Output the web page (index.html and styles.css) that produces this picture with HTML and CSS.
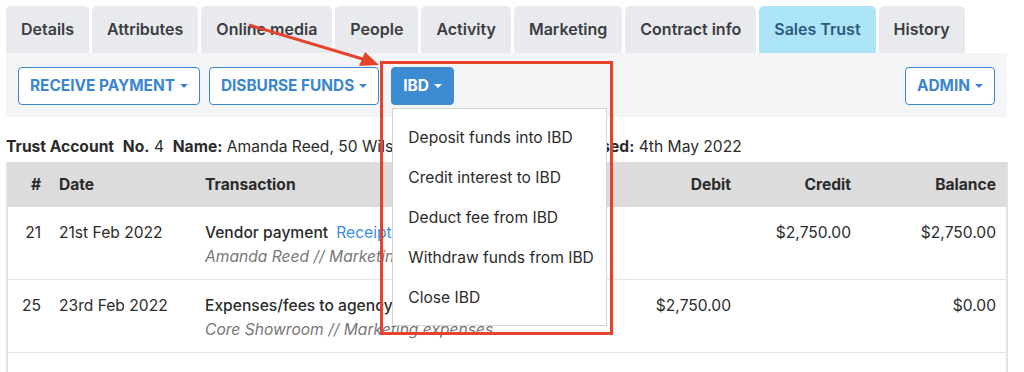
FILE: index.html
```html
<!DOCTYPE html>
<html lang="en">
<head>
  <meta charset="UTF-8">
  <title>Sales Trust</title>
  <link rel="stylesheet" href="styles.css">
</head>
<body>
  <div class="page">
    <ul class="tabs">
      <li class="tab">Details</li>
      <li class="tab">Attributes</li>
      <li class="tab">Online media</li>
      <li class="tab">People</li>
      <li class="tab">Activity</li>
      <li class="tab">Marketing</li>
      <li class="tab">Contract info</li>
      <li class="tab active">Sales Trust</li>
      <li class="tab">History</li>
    </ul>

    <div class="toolbar">
      <button class="btn">RECEIVE PAYMENT <span class="caret"></span></button>
      <button class="btn">DISBURSE FUNDS <span class="caret"></span></button>
      <div class="dropdown">
        <button class="btn btn-primary">IBD <span class="caret"></span></button>
        <ul class="dropdown-menu">
          <li>Deposit funds into IBD</li>
          <li>Credit interest to IBD</li>
          <li>Deduct fee from IBD</li>
          <li>Withdraw funds from IBD</li>
          <li>Close IBD</li>
        </ul>
      </div>
      <button class="btn btn-right">ADMIN <span class="caret"></span></button>
    </div>

    <div class="account-info">
      <b>Trust Account</b>&nbsp; <b>No.</b> 4&nbsp; <b>Name:</b> Amanda Reed, 50 Wilson Street, Brighton East&nbsp; <b>Closed:</b> 4th May 2022
    </div>

    <table class="ledger">
      <colgroup>
        <col style="width: 42px">
        <col style="width: 146px">
        <col style="width: 426px">
        <col style="width: 120px">
        <col style="width: 120px">
        <col style="width: 146px">
      </colgroup>
      <thead>
        <tr>
          <th class="col-num">#</th>
          <th>Date</th>
          <th>Transaction</th>
          <th class="col-amt">Debit</th>
          <th class="col-amt">Credit</th>
          <th class="col-amt">Balance</th>
        </tr>
      </thead>
      <tbody>
        <tr>
          <td class="col-num">21</td>
          <td>21st Feb 2022</td>
          <td>
            <div class="txn-title">Vendor payment <a class="link">Receipt</a></div>
            <div class="txn-sub">Amanda Reed // Marketing</div>
          </td>
          <td class="col-amt"></td>
          <td class="col-amt">$2,750.00</td>
          <td class="col-amt">$2,750.00</td>
        </tr>
        <tr>
          <td class="col-num">25</td>
          <td>23rd Feb 2022</td>
          <td>
            <div class="txn-title">Expenses/fees to agency</div>
            <div class="txn-sub">Core Showroom // Marketing expenses</div>
          </td>
          <td class="col-amt">$2,750.00</td>
          <td class="col-amt"></td>
          <td class="col-amt">$0.00</td>
        </tr>
        <tr>
          <td class="col-num">&nbsp;</td>
          <td></td>
          <td>
            <div class="txn-title">&nbsp;</div>
            <div class="txn-sub">&nbsp;</div>
          </td>
          <td class="col-amt"></td>
          <td class="col-amt"></td>
          <td class="col-amt"></td>
        </tr>
      </tbody>
    </table>

    <!-- annotation overlay -->
    <div class="highlight"></div>
    <svg class="arrow" width="140" height="50" viewBox="0 0 140 50">
      <line x1="3" y1="3" x2="120" y2="38" stroke="#e5432d" stroke-width="3"/>
      <polygon points="133,43 113,44 119,30" fill="#e5432d"/>
    </svg>
  </div>
</body>
</html>
```

FILE: styles.css
```css
body {
  margin: 0;
  font-family: Inter, "Liberation Sans", Arial, sans-serif;
  font-size: 15.6px;
  color: #2b2b2b;
  background: #fff;
}
.page {
  position: relative;
  padding: 6px;
  height: 360px;
  overflow: hidden;
}
.tabs {
  list-style: none;
  margin: 0;
  padding: 0;
  display: flex;
  gap: 3px;
}
.tab {
  height: 47px;
  line-height: 47px;
  padding: 0 15px;
  background: #e9eaed;
  border-radius: 5px 5px 0 0;
  font-size: 16px;
  font-weight: 600;
  color: #3a3d41;
}
.tab.active {
  background: #ade5f8;
  color: #2d5a80;
}
.toolbar {
  display: flex;
  align-items: center;
  gap: 9px;
  width: 1001px;
  height: 64px;
  padding: 1px 12px 0;
  box-sizing: border-box;
  background: #f4f5f7;
}
.btn {
  height: 38px;
  padding: 0 11px;
  border: 1px solid #3a87d0;
  border-radius: 4px;
  background: #fff;
  color: #3a87d0;
  font-family: inherit;
  font-size: 15.4px;
  font-weight: 700;
  white-space: nowrap;
  display: flex;
  align-items: center;
  gap: 5px;
}
.btn-primary {
  background: #3d8bd0;
  color: #fff;
  border-color: #3d8bd0;
}
.btn-right {
  margin-left: auto;
}
.caret {
  width: 0;
  height: 0;
  border-left: 4px solid transparent;
  border-right: 4px solid transparent;
  border-top: 4px solid currentColor;
}
.dropdown {
  position: relative;
  margin-left: 3px;
}
.dropdown-menu {
  position: absolute;
  top: 41px;
  left: 1px;
  z-index: 5;
  width: 215px;
  margin: 0;
  padding: 9px 0 7px;
  list-style: none;
  background: #fff;
  border: 1px solid #d4d4d4;
  box-sizing: border-box;
}
.dropdown-menu li {
  height: 40px;
  line-height: 40px;
  padding: 0 15px;
  white-space: nowrap;
  color: #2b2b2b;
}
.account-info {
  margin: 20px 0 0;
  height: 25px;
  line-height: 20px;
  white-space: nowrap;
}
.ledger {
  width: 1000px;
  table-layout: fixed;
  border-collapse: collapse;
  border-left: 2px solid #e2e2e2;
  border-right: 2px solid #e2e2e2;
}
.ledger th {
  height: 45px;
  padding: 0 10px;
  background: #dcdcdc;
  font-weight: 700;
  text-align: left;
}
.ledger td {
  padding: 14px 10px 10px;
  border-bottom: 1px solid #e3e3ea;
  vertical-align: top;
  line-height: 24px;
  white-space: nowrap;
}
.ledger .col-num {
  text-align: right;
  padding-right: 8px;
}
.ledger .col-amt {
  text-align: right;
}
.txn-title {
  font-weight: 500;
}
.txn-sub {
  font-style: italic;
  color: #777;
}
.link {
  color: #3a8fe0;
  font-weight: 400;
  margin-left: 4px;
}
.highlight {
  position: absolute;
  left: 380px;
  top: 61px;
  width: 227px;
  height: 268px;
  border: 3px solid #e5432d;
  z-index: 6;
}
.arrow {
  position: absolute;
  left: 246px;
  top: 22px;
  z-index: 6;
}
```
